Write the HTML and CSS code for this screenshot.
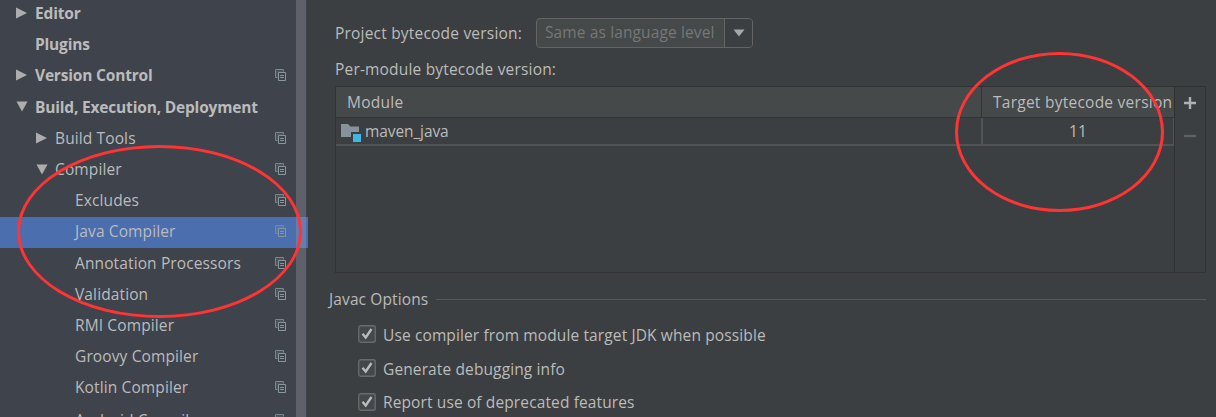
FILE: index.html
```html
<!DOCTYPE html>
<html lang="en">
<head>
<meta charset="utf-8">
<title>Settings - Java Compiler</title>
<link rel="stylesheet" href="styles.css">
</head>
<body>
<svg class="defs" width="0" height="0">
  <symbol id="copy" viewBox="0 0 11 12"><path d="M2.500 8.500H.5v-8h8v2" fill="none" stroke="#7b8790"/><path d="M2 8V2h6" fill="none" stroke="#8a969e" stroke-opacity=".4"/><path d="M3.500 3.500h7v8h-7z" fill="none" stroke="#8a969e"/><path d="M5 6.500h4M5 8.500h4" stroke="#8a969e"/></symbol>
  <symbol id="right" viewBox="0 0 11 12"><path d="M0 .5 11 6 0 11.500z" fill="#adadad"/></symbol>
  <symbol id="down" viewBox="0 0 12 11"><path d="M.5.500h11L6 10.500z" fill="#adadad"/></symbol>
  <symbol id="check" viewBox="0 0 18 18"><rect x=".75" y=".75" width="16.500" height="16.500" rx="2" fill="#43494a" stroke="#6b6b6b" stroke-width="1.300"/><path d="M4.500 8.700 7.700 12.500 13.500 4" fill="none" stroke="#bbb" stroke-width="2.300"/></symbol>
</svg>
<div class="window">
  <nav class="sidebar">
    <ul class="tree">
      <li class="row top"><svg class="arrow"><use href="#right"/></svg><span class="label">Editor</span></li>
      <li class="row top"><span class="arrow"></span><span class="label">Plugins</span></li>
      <li class="row top"><svg class="arrow"><use href="#right"/></svg><span class="label">Version Control</span><svg class="copy"><use href="#copy"/></svg></li>
      <li class="row top"><svg class="arrow open"><use href="#down"/></svg><span class="label">Build, Execution, Deployment</span></li>
      <li class="row group"><svg class="arrow"><use href="#right"/></svg><span class="label">Build Tools</span><svg class="copy"><use href="#copy"/></svg></li>
      <li class="row group"><svg class="arrow open"><use href="#down"/></svg><span class="label">Compiler</span><svg class="copy"><use href="#copy"/></svg></li>
      <li class="row leaf"><span class="label">Excludes</span><svg class="copy"><use href="#copy"/></svg></li>
      <li class="row leaf selected"><span class="label">Java Compiler</span><svg class="copy"><use href="#copy"/></svg></li>
      <li class="row leaf"><span class="label">Annotation Processors</span><svg class="copy"><use href="#copy"/></svg></li>
      <li class="row leaf"><span class="label">Validation</span><svg class="copy"><use href="#copy"/></svg></li>
      <li class="row leaf"><span class="label">RMI Compiler</span><svg class="copy"><use href="#copy"/></svg></li>
      <li class="row leaf"><span class="label">Groovy Compiler</span><svg class="copy"><use href="#copy"/></svg></li>
      <li class="row leaf"><span class="label">Kotlin Compiler</span><svg class="copy"><use href="#copy"/></svg></li>
      <li class="row leaf last"><span class="label">Android Compilers</span><svg class="copy"><use href="#copy"/></svg></li>
    </ul>
    <div class="scrollbar"></div>
  </nav>
  <main class="content">
    <div class="version">
      <span class="caption">Project bytecode version:</span>
      <div class="combo"><span class="value">Same as language level</span><span class="drop"><svg width="12" height="8" viewBox="0 0 12 8"><path d="M.5.500h11L6 7.500z" fill="#a4a8aa"/></svg></span></div>
    </div>
    <div class="per-module">Per-module bytecode version:</div>
    <section class="panel">
      <div class="table">
        <div class="head"><span class="cell name">Module</span><span class="cell target">Target bytecode version</span></div>
        <div class="item">
          <span class="cell name"><svg class="folder" width="20" height="19" viewBox="0 0 20 19"><path d="M0 1h7l2.500 2.500H18V9h-8v5H0z" fill="#87939a"/><path d="M12 11h8v8h-8z" fill="#40b6e0"/></svg><span class="module">maven_java</span></span>
          <span class="cell target">11</span>
        </div>
      </div>
      <div class="tools">
        <svg width="14" height="14" viewBox="0 0 14 14"><path d="M7 1v12M1 7h12" stroke="#afb1b3" stroke-width="2.400"/></svg>
        <svg width="14" height="14" viewBox="0 0 14 14"><path d="M1 7h12" stroke="#5f6162" stroke-width="2.400"/></svg>
      </div>
    </section>
    <div class="legend"><span>Javac Options</span><i class="rule"></i></div>
    <div class="options">
      <div class="option"><svg class="check"><use href="#check"/></svg><span>Use compiler from module target JDK when possible</span></div>
      <div class="option"><svg class="check"><use href="#check"/></svg><span>Generate debugging info</span></div>
      <div class="option"><svg class="check"><use href="#check"/></svg><span>Report use of deprecated features</span></div>
    </div>
  </main>
  <div class="mark mark-tree"></div>
  <div class="mark mark-target"></div>
</div>
</body>
</html>
```
FILE: styles.css
```css
* { box-sizing: border-box; }
body { margin: 0; background: #3c3f41; color: #bbb; font: 15.5px/20px "Open Sans", "Noto Sans", sans-serif; letter-spacing: .12px; }
.defs { position: absolute; }
.window { position: relative; display: flex; width: 1216px; height: 417px; overflow: hidden; white-space: nowrap; }
.sidebar { display: flex; width: 307px; background: #3f434c; position: relative; }
.tree { flex: none; width: 308px; margin: -1.5px 0 0; padding: 0; list-style: none; }
.row { display: flex; align-items: center; height: 31.2px; padding-bottom: 2px; }
.top { padding-left: 16px; font-weight: 700; letter-spacing: -.18px; }
.group { padding-left: 36px; }
.leaf { padding-left: 75px; }
.last { padding-bottom: 0; }
.selected { background: #4b6eaf; }
.arrow { flex: none; width: 11px; height: 12px; margin-right: 8px; }
.arrow.open { width: 12px; height: 11px; margin-right: 7px; }
.label { flex: 1; }
.copy { width: 11px; height: 12px; margin-right: 22px; }
.scrollbar { position: absolute; top: 0; right: 1px; width: 10px; height: 417px; background: rgba(166, 166, 174, .3); }
.content { flex: 1; padding: 18px 10px 0 22px; }
.version { display: flex; align-items: center; height: 30px; padding-left: 6px; }
.caption { width: 201px; letter-spacing: .2px; padding-bottom: 1px; }
.combo { display: flex; width: 217px; height: 30px; border: 1px solid #646464; border-radius: 4px; background: #45494a; color: #777; }
.value { flex: 1; padding: 3px 0 0 8px; }
.drop { display: flex; align-items: center; justify-content: center; width: 28px; border-left: 1px solid #646464; background: #3c3f41; border-radius: 0 3px 3px 0; }
.per-module { margin: 11px 0 7px 6px; letter-spacing: .18px; }
.panel { display: flex; height: 187px; margin-left: 6px; border: 1px solid #323232; }
.table { flex: 1; border-right: 1px solid #323232; }
.head, .item { display: flex; }
.head { height: 31px; background: #45494a; border-bottom: 1px solid #323537; letter-spacing: .25px; }
.item { height: 28px; border-bottom: 2px solid #515355; }
.cell { display: flex; align-items: center; }
.name { flex: 1; }
.head .name { padding-left: 11px; }
.item .name { padding-left: 5px; gap: 4px; }
.module { letter-spacing: -.1px; }
.target { width: 193px; }
.head .target { padding-left: 11px; border-left: 1px solid #323537; }
.item .target { justify-content: center; border-left: 2px solid #515355; border-right: 1px solid #515355; }
.folder { margin-top: 2px; }
.tools { display: flex; flex-direction: column; align-items: center; gap: 19px; width: 30px; padding-top: 9px; }
.legend { display: flex; align-items: center; height: 20px; margin-top: 16px; }
.legend span { width: 107px; }
.rule { flex: 1; height: 1px; background: #555759; }
.options { padding: 9px 0 0 29px; }
.option { display: flex; align-items: center; height: 33.7px; gap: 7px; }
.check { width: 18px; height: 18px; margin-top: -1px; }
.mark { position: absolute; border: 3px solid #ff3434; border-radius: 50%; }
.mark-tree { left: 17px; top: 145px; width: 285px; height: 173px; }
.mark-target { left: 955px; top: 52px; width: 209px; height: 160px; }
```
